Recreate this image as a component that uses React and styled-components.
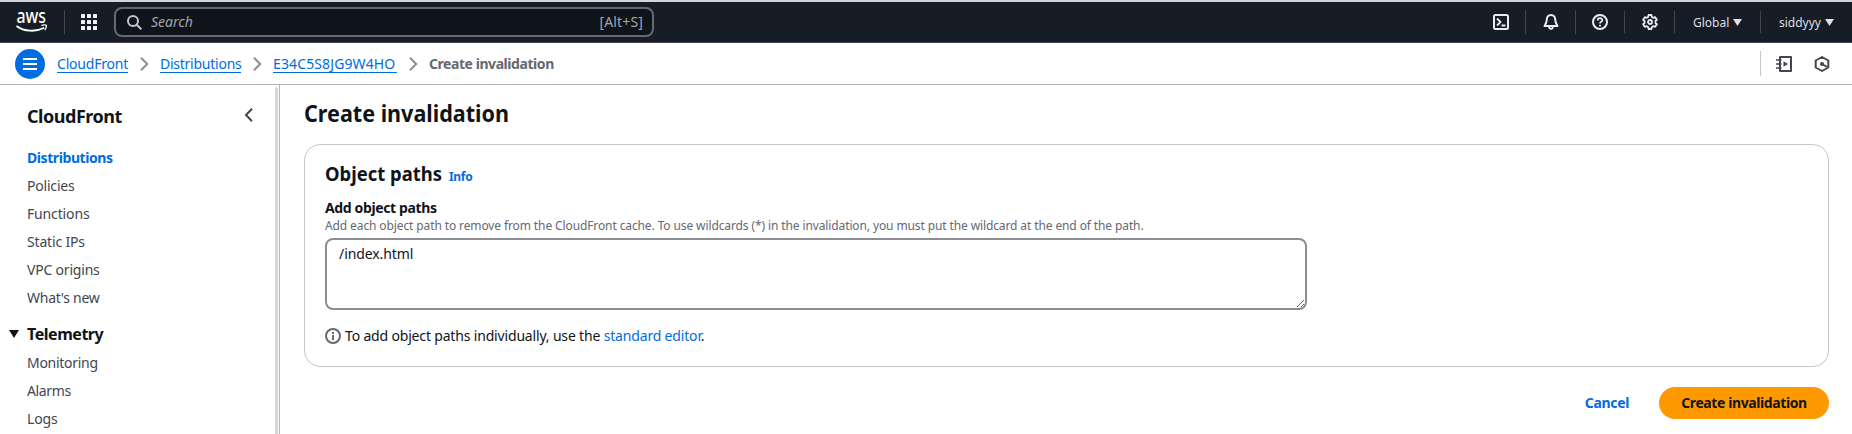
import React from "react";
import styled, { createGlobalStyle } from "styled-components";

const GlobalStyle = createGlobalStyle`
  * { box-sizing: border-box; }
  body { margin: 0; background: #fff; overflow: hidden; }
`;

const Page = styled.div`
  height: 434px;
  display: flex;
  flex-direction: column;
  background: #fff;
  color: #0f141a;
  font-family: "Noto Sans", "Open Sans", sans-serif;
  font-size: 14px;
  line-height: 20px;
  overflow: hidden;
`;

const T = styled.span`
  white-space: nowrap;
  letter-spacing: ${(p) => p.$ls || 0}px;
`;

const Condensed = styled.span`
  display: inline-block;
  white-space: nowrap;
  transform: scaleX(${(p) => p.$x});
  transform-origin: 0 50%;
`;

const TopNav = styled.header`
  flex: none;
  height: 43px;
  border-top: 2px solid #d3d5d8;
  border-bottom: 1px solid #424650;
  background: #161d26;
  display: flex;
  align-items: center;
  padding: 0 18px 0 16px;
  color: #dedee3;
`;

const LogoSvg = styled.svg`
  overflow: visible;
`;

const Divider = styled.span`
  flex: none;
  width: 1px;
  height: ${(p) => p.$h || 24}px;
  background: ${(p) => p.$color || "#424650"};
`;

const AppsButton = styled.span`
  display: flex;
  margin: 0 17px 0 16px;
`;

const SearchBox = styled.div`
  width: 540px;
  height: 30px;
  border: 2px solid #656871;
  border-radius: 8px;
  background: #0f141a;
  display: flex;
  align-items: center;
  padding: 0 9px 0 11px;
  color: #a4a4ad;
  em { flex: 1; margin-left: 9px; }
`;

const NavTools = styled.div`
  margin-left: auto;
  display: flex;
  align-items: center;
`;

const IconSlot = styled.span`
  width: ${(p) => p.$w || 49}px;
  display: flex;
  justify-content: center;
  color: #ebebf0;
`;

const NavMenu = styled.span`
  width: ${(p) => p.$w}px;
  margin-right: ${(p) => p.$gap || 0}px;
  padding-left: 18px;
  display: flex;
  align-items: center;
  justify-content: space-between;
  font-size: 12px;
  span { padding-top: 2px; }
`;

const CrumbBar = styled.nav`
  flex: none;
  height: 42px;
  border-bottom: 1px solid #b4b4bb;
  display: flex;
  align-items: center;
  padding: 0 22px 0 15px;
`;

const MenuButton = styled.span`
  width: 30px;
  height: 30px;
  border-radius: 50%;
  background: #006ce0;
  display: flex;
  align-items: center;
  justify-content: center;
  margin-right: 12px;
`;

const Crumb = styled.a`
  flex: none;
  color: #006ce0;
  border-bottom: 1px solid #006ce0;
  line-height: 17px;
  white-space: nowrap;
  letter-spacing: ${(p) => p.$ls || 0}px;
  width: ${(p) => p.$w}px;
`;

const CrumbSep = styled.span`
  width: 32px;
  display: flex;
  justify-content: center;
`;

const CurrentCrumb = styled.span`
  color: #656871;
  font-weight: 700;
  letter-spacing: -0.44px;
`;

const PanelTools = styled.div`
  margin-left: auto;
  display: flex;
  align-items: center;
  color: #424650;
  svg:nth-of-type(1) { margin: 0 22px 0 15px; }
`;

const Body = styled.div`
  flex: 1;
  display: flex;
  min-height: 0;
`;

const Sidebar = styled.aside`
  flex: none;
  width: 280px;
  border-right: 1px solid #b4b4bb;
  display: flex;
`;

const ScrollThumb = styled.span`
  width: 3px;
  margin: 2px 1px 0 0;
  border-radius: 2px 2px 0 0;
  background: #d5d5d5;
`;

const SideContent = styled.div`
  flex: 1;
  padding: 20px 19px 0 27px;
`;

const SideHeader = styled.div`
  display: flex;
  justify-content: space-between;
  align-items: center;
  font-size: 18px;
  font-weight: 700;
  line-height: 22px;
  height: 22px;
  margin-bottom: 17px;
  svg { margin-bottom: 3px; }
`;

const NavItem = styled.div`
  height: 28px;
  line-height: 28px;
  color: ${(p) => (p.$active ? "#006ce0" : "#424650")};
  font-weight: ${(p) => (p.$active ? 700 : 400)};
  letter-spacing: ${(p) => p.$ls || 0}px;
`;

const GroupTitle = styled.div`
  display: flex;
  align-items: center;
  gap: 8px;
  margin: 8px 0 1px -18px;
  height: 28px;
  font-size: 16px;
  font-weight: 700;
`;

const Main = styled.main`
  flex: 1;
  padding: 13px 23px 0 24px;
`;

const Title = styled.h1`
  margin: 0 0 16px;
  font-size: 24px;
  line-height: 30px;
  font-weight: 700;
`;

const Card = styled.section`
  height: 223px;
  border: 1px solid #c6c6cd;
  border-radius: 16px;
  padding: 17px 20px 0;
`;

const CardHeader = styled.div`
  display: flex;
  align-items: baseline;
  height: 24px;
  line-height: 24px;
  h2 { width: 124px; margin: 0; font-size: 20px; font-weight: 700; line-height: 24px; }
  a { font-size: 12px; font-weight: 700; letter-spacing: -0.3px; color: #006ce0; }
`;

const Label = styled.div`
  margin-top: 12px;
  font-weight: 700;
`;

const Hint = styled.div`
  font-size: 12px;
  line-height: 16px;
  color: #656871;
  margin-bottom: 4px;
`;

const PathInput = styled.textarea`
  display: block;
  width: 982px;
  height: 72px;
  border: 2px solid #8c8c94;
  border-radius: 8px;
  padding: 4px 12px;
  font: inherit;
  letter-spacing: -0.08px;
  color: #0f141a;
  background: #fff;
  outline: none;
  resize: both;
`;

const Note = styled.div`
  display: flex;
  align-items: center;
  margin-top: 16px;
  gap: 4px;
  a { color: #006ce0; }
`;

const Actions = styled.div`
  display: flex;
  justify-content: flex-end;
  align-items: center;
  margin-top: 20px;
  font-weight: 700;
`;

const Cancel = styled.a`
  color: #006ce0;
  margin-right: 30px;
`;

const Submit = styled.button`
  width: 170px;
  height: 32px;
  border: 0;
  border-radius: 20px;
  background: #ff9900;
  color: #0f141a;
  font: inherit;
  padding: 0;
`;

const Caret = ({ w = 9, h = 7 }) => (
  <svg width={w} height={h} viewBox="0 0 9 7"><path d="M0 0h9L4.5 7z" fill="currentColor" /></svg>
);

const Chevron = ({ left, color, size = 14 }) => (
  <svg width={size} height={size} viewBox="0 0 14 14" fill="none" stroke={color} strokeWidth="2">
    <path d={left ? "M10 .8L4 7l6 6.2" : "M4 .8L10.2 7 4 13.2"} />
  </svg>
);

const Icon = ({ children, size = 16 }) => (
  <svg width={size} height={size} viewBox="0 0 16 16" fill="none" stroke="currentColor" strokeWidth="2" strokeLinejoin="round">
    {children}
  </svg>
);

const AwsLogo = () => (
  <LogoSvg width="48" height="24" viewBox="0 0 48 24">
    <text x="0.5" y="13" fontSize="19" fontWeight="500" fill="#fff" textLength="29.5" lengthAdjust="spacingAndGlyphs">aws</text>
    <path d="M.5 16C8 21.700 20 22.200 28.200 17.800" stroke="#fff" strokeWidth="1.8" fill="none" />
    <path d="M25.300 15.500c2.500-.9 5.200-.6 5.200.1s-.5 3-1.800 4.600" stroke="#fff" strokeWidth="1.300" fill="none" />
  </LogoSvg>
);

const primaryItems = [
  ["Distributions", -0.42],
  ["Policies", -0.2],
  ["Functions", -0.15],
  ["Static IPs", -0.17],
  ["VPC origins", -0.2],
  ["What's new", -0.27],
];
const telemetryItems = [
  ["Monitoring", -0.28],
  ["Alarms", -0.35],
  ["Logs", -0.1],
];

export default function App() {
  return (
    <Page>
      <GlobalStyle />
      <TopNav>
        <AwsLogo />
        <Divider />
        <AppsButton>
          <svg width="16" height="16" fill="#f3f3f7">
            {[0, 6, 12].map((y) => [0, 6, 12].map((x) => <rect key={`${x}-${y}`} x={x} y={y} width="4" height="4" rx=".6" />))}
          </svg>
        </AppsButton>
        <SearchBox>
          <svg width="15" height="15" fill="none" stroke="#c6c6cd" strokeWidth="2">
            <circle cx="6" cy="6" r="5" /><path d="M9.700 9.700l4.600 4.600" />
          </svg>
          <em>Search</em>
          <T $ls={0.15}>[Alt+S]</T>
        </SearchBox>
        <NavTools>
          <IconSlot><Icon><rect x="1" y="1" width="14" height="14" rx="1.500" /><path d="M4 4.500L7.500 8 4 11.500M8.500 11.500h4" strokeWidth="1.800" /></Icon></IconSlot>
          <Divider />
          <IconSlot><Icon><path d="M8 1C5 1 3.800 3.200 3.800 5.500c0 3-.8 4.300-2.300 6.500h13c-1.500-2.200-2.300-3.500-2.300-6.500C12.200 3.200 11 1 8 1z" /><path d="M6 13c.3 1.300 1 2 2 2s1.700-.7 2-2" /></Icon></IconSlot>
          <Divider />
          <IconSlot $w={48}><Icon><circle cx="8" cy="8" r="7" /><path d="M5.700 6.500C5.700 3.400 10.300 3.500 10.300 6.200c0 1.600-2.300 1.600-2.300 3.300M8 10.800v1.600" strokeWidth="1.800" /></Icon></IconSlot>
          <Divider $h={22} />
          <IconSlot><Icon><path d="M6.600 1h2.800l.5 2 1.300.8 2-.6 1.700 2.600L13.500 7v2l1.400 1.200-1.700 2.600-2-.6-1.300.8-.5 2H6.600l-.5-2-1.300-.8-2 .6-1.700-2.600L2.500 9V7L1.100 5.800l1.700-2.600 2 .6L6.100 3z" strokeWidth="1.800" /><circle cx="8" cy="8" r="2" strokeWidth="1.800" /></Icon></IconSlot>
          <Divider $h={22} />
          <NavMenu $w={67} $gap={18}><T>Global</T><Caret /></NavMenu>
          <Divider $h={22} />
          <NavMenu $w={73}><T>siddyyy</T><Caret /></NavMenu>
        </NavTools>
      </TopNav>

      <CrumbBar>
        <MenuButton>
          <svg width="14" height="12" fill="#fff"><path d="M0 0h14v2H0zM0 5h14v2H0zM0 10h14v2H0z" /></svg>
        </MenuButton>
        <Crumb $w={71} $ls={-0.2}>CloudFront</Crumb>
        <CrumbSep><Chevron color="#8c8c94" /></CrumbSep>
        <Crumb $w={81} $ls={-0.25}>Distributions</Crumb>
        <CrumbSep><Chevron color="#8c8c94" /></CrumbSep>
        <Crumb $w={124} $ls={0.12}>E34C5S8JG9W4HO</Crumb>
        <CrumbSep><Chevron color="#8c8c94" /></CrumbSep>
        <CurrentCrumb>Create invalidation</CurrentCrumb>
        <PanelTools>
          <Divider $color="#c6c6cd" $h={25} />
          <Icon><path d="M4 1h11v14H4z" /><path d="M0 4h5.500M0 8h5.500M0 12h5.500" strokeWidth="1.600" /><path d="M7.500 5.300v5.400L12 8z" fill="currentColor" stroke="none" /></Icon>
          <Icon><path d="M8 1l6.300 3.500v7L8 15l-6.300-3.500v-7z" /><circle cx="8" cy="8" r="2" fill="currentColor" stroke="none" /><path d="M8 8l5 3" /></Icon>
        </PanelTools>
      </CrumbBar>

      <Body>
        <Sidebar>
          <SideContent>
            <SideHeader><T $ls={-0.47}>CloudFront</T><Chevron left color="#424650" /></SideHeader>
            {primaryItems.map(([name, ls], i) => <NavItem key={name} $active={i === 0} $ls={ls}>{name}</NavItem>)}
            <GroupTitle><Caret w={10} h={8} /><T $ls={-0.46}>Telemetry</T></GroupTitle>
            {telemetryItems.map(([name, ls]) => <NavItem key={name} $ls={ls}>{name}</NavItem>)}
          </SideContent>
          <ScrollThumb />
        </Sidebar>
        <Main>
          <Title><Condensed $x={0.898}>Create invalidation</Condensed></Title>
          <Card>
            <CardHeader><h2><Condensed $x={0.922}>Object paths</Condensed></h2><a>Info</a></CardHeader>
            <Label><T $ls={-0.37}>Add object paths</T></Label>
            <Hint><T $ls={-0.112}>Add each object path to remove from the CloudFront cache. To use wildcards (*) in the invalidation, you must put the wildcard at the end of the path.</T></Hint>
            <PathInput defaultValue="/index.html" spellCheck={false} />
            <Note>
              <svg width="16" height="16" fill="none" stroke="#656871" strokeWidth="2"><circle cx="8" cy="8" r="7" /><path d="M8 4v2M8 7v5" /></svg>
              <T $ls={-0.17}>To add object paths individually, use the <a>standard editor</a>.</T>
            </Note>
          </Card>
          <Actions>
            <Cancel><T $ls={-0.35}>Cancel</T></Cancel>
            <Submit><T $ls={-0.4}>Create invalidation</T></Submit>
          </Actions>
        </Main>
      </Body>
    </Page>
  );
}
